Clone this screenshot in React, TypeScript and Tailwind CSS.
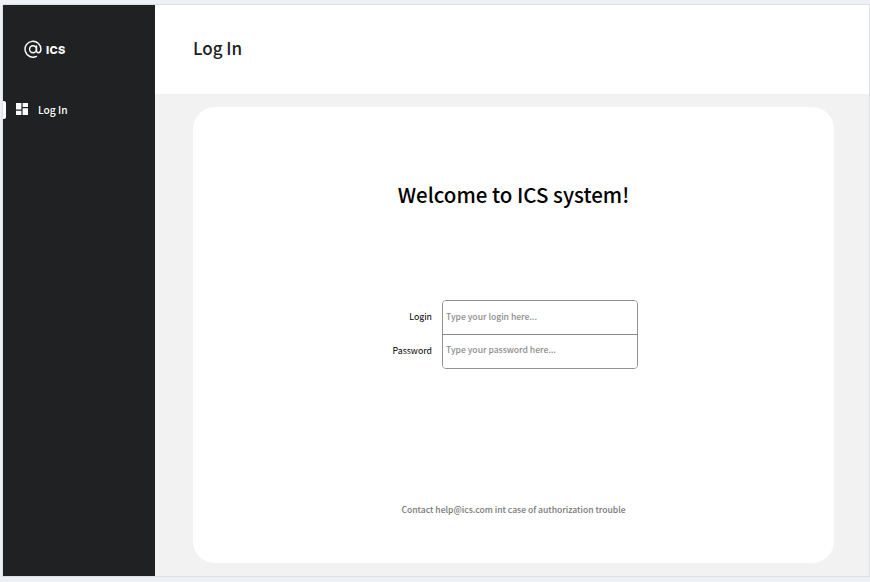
function LogoMark() {
  return (
    <svg width="18" height="18" viewBox="0 0 24 24" fill="none" stroke="#fff" strokeWidth="1.9" strokeLinecap="round">
      <circle cx="12" cy="12.3" r="4.6" />
      <path d="M16.6 7.9v6.2c0 1.8 1.1 2.8 2.6 2.8 1.8 0 3.4-1.6 3.4-4.6A10.6 10.6 0 1 0 16.5 21.9" />
    </svg>
  );
}

function DashboardIcon() {
  return (
    <svg width="12" height="12" viewBox="0 0 12 12" fill="#fff">
      <path d="M0 0h5.4v6.6H0zM6.6 0H12v4H6.6zM0 7.8h5.4v4.2H0zM6.6 5.2H12V12H6.6z" />
    </svg>
  );
}

const fieldClass =
  "w-full bg-white px-[3px] text-[8.57px] font-medium text-[#777] placeholder:text-[#8c8c8c] outline-none";

export default function App() {
  return (
    <div className="h-[582px] w-[870px] overflow-hidden bg-[#edf0f5] pt-1 pl-0.5 font-['Noto_Sans_CJK_SC','Noto_Sans',sans-serif] font-medium">
      <div className="flex h-[573px] w-[868px] border border-[#dcdfe3]">
        <aside className="flex w-[152px] shrink-0 flex-col bg-[#202123] pt-[35px]">
          <div className="flex h-[18px] items-center gap-[4px] pl-[21px]">
            <LogoMark />
            <span className="pt-[2px] font-['Inter',sans-serif] text-[11px] font-extrabold leading-[18px] tracking-[0.3px] text-white">ICS</span>
          </div>
          <nav className="mt-[43px] flex h-[18px] items-center">
            <span className="h-[18px] w-[3px] rounded-r-[2px] bg-white" />
            <span className="ml-[10px] -mt-[2px]">
              <DashboardIcon />
            </span>
            <a className="ml-[10px] text-[10.2px] leading-[18px] text-white">Log In</a>
          </nav>
        </aside>
        <div className="flex min-w-0 flex-1 flex-col bg-[#f2f2f2]">
          <header className="flex h-[89px] shrink-0 items-center bg-white pb-[3px] pl-[38px]">
            <h1 className="text-[17px] leading-6 text-[#202123]">Log In</h1>
          </header>
          <main className="mt-[13px] ml-[38px] flex h-[456px] w-[641px] flex-col items-center rounded-[22px] bg-white pt-[71px]">
            <h2 className="h-8 whitespace-nowrap text-[20.5px] leading-8 text-black">Welcome to ICS system!</h2>
            <form className="mt-[90px] ml-[199px] flex w-[246px] gap-[10px] self-start">
              <div className="flex w-10 shrink-0 flex-col items-end text-[8.8px] font-normal text-black">
                <label className="leading-[34px]">Login</label>
                <label className="leading-[34px]">Password</label>
              </div>
              <div className="flex h-[69px] w-[196px] shrink-0 flex-col overflow-hidden rounded-[4px] border border-[#929292]">
                <input className={fieldClass + " h-[33px] pb-[3px]"} placeholder="Type your login here..." />
                <input className={fieldClass + " h-[34px] border-t border-[#888] pb-[5px]"} type="password" placeholder="Type your password here..." />
              </div>
            </form>
            <p className="mt-[132px] whitespace-nowrap text-[8.57px] leading-4 text-[#777]">
              Contact help@ics.com int case of authorization trouble
            </p>
          </main>
        </div>
      </div>
    </div>
  );
}
